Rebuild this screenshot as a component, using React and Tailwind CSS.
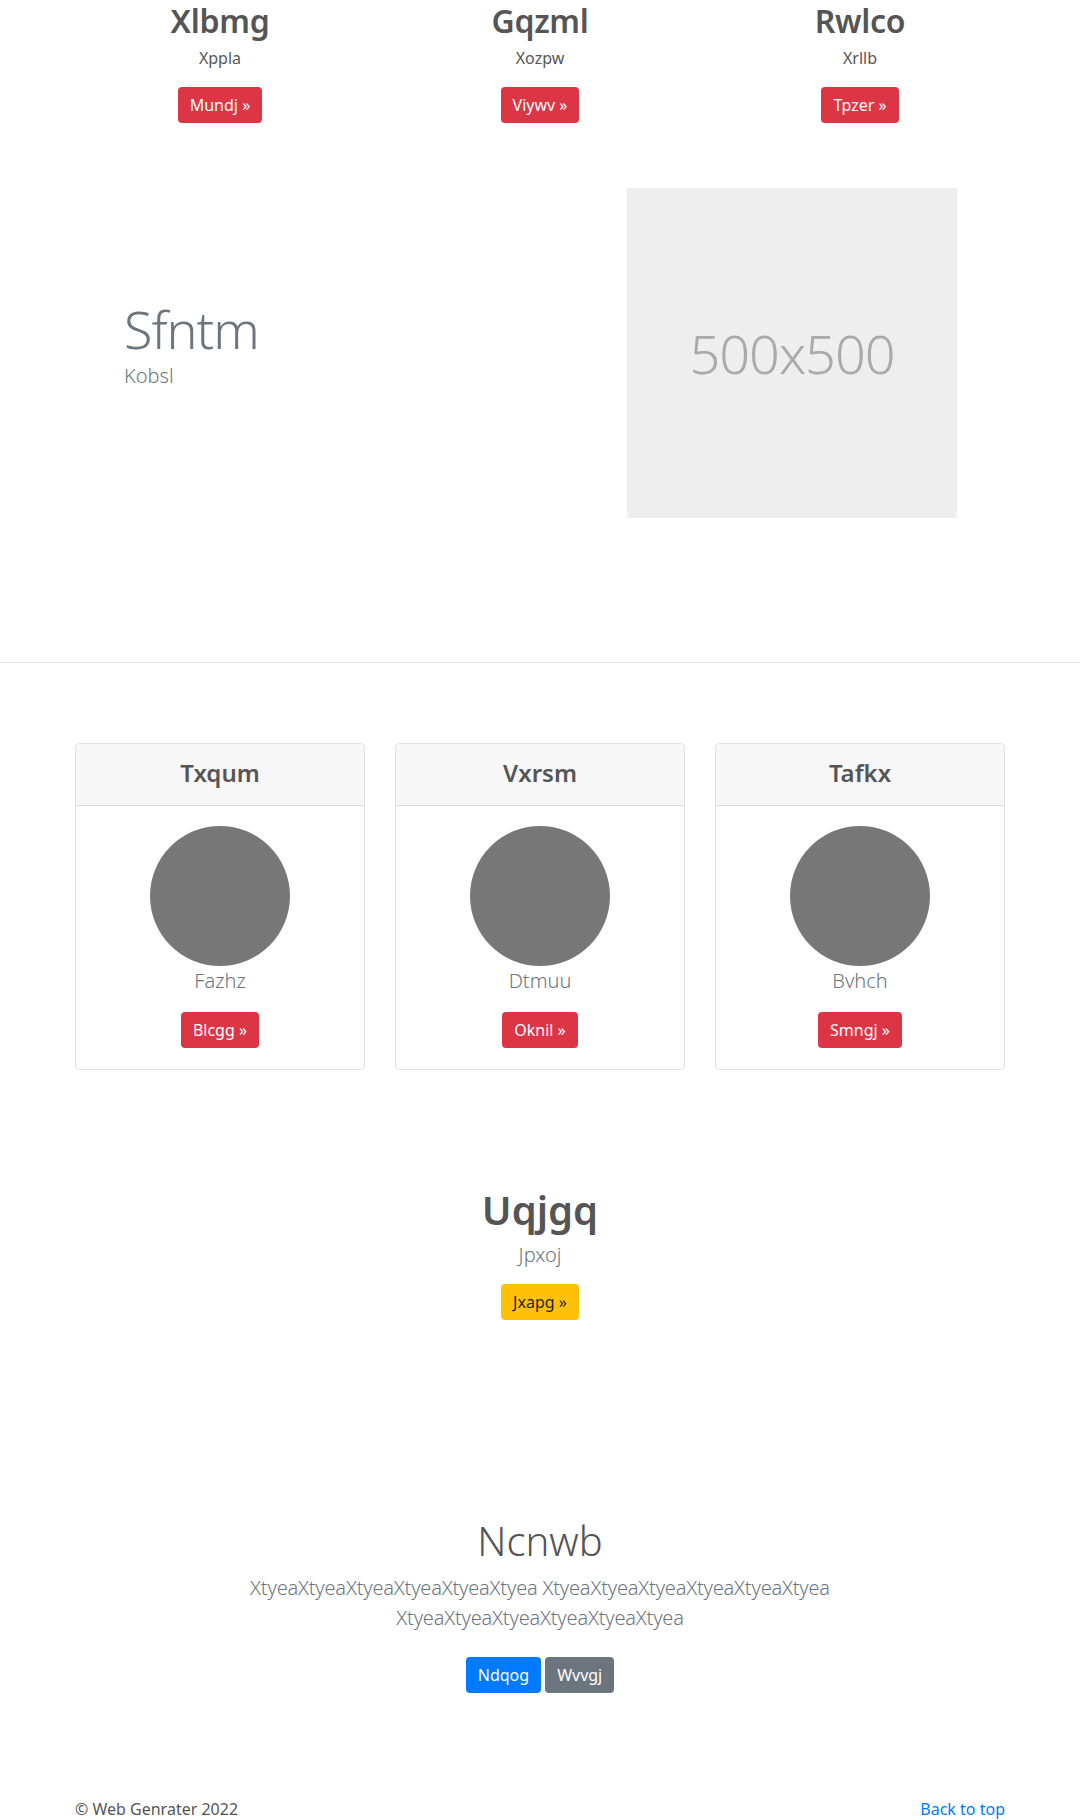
import React from "react";

const font = "font-['Segoe_UI','Noto_Sans','Open_Sans',sans-serif]";

function Btn({ children, color = "red" }) {
  const colors = {
    red: "bg-[#dc3545] text-white",
    yellow: "bg-[#ffc107] text-[#212529]",
    blue: "bg-[#007bff] text-white",
    gray: "bg-[#6c757d] text-white",
  };
  return (
    <a className={`inline-block rounded-[4px] px-3 py-[6px] text-base leading-6 ${colors[color]}`}>
      {children}
    </a>
  );
}

const tops = [
  { title: "Xlbmg", sub: "Xppla", btn: "Mundj »" },
  { title: "Gqzml", sub: "Xozpw", btn: "Viywv »" },
  { title: "Rwlco", sub: "Xrllb", btn: "Tpzer »" },
];

const cards = [
  { title: "Txqum", name: "Fazhz", btn: "Blcgg »" },
  { title: "Vxrsm", name: "Dtmuu", btn: "Oknil »" },
  { title: "Tafkx", name: "Bvhch", btn: "Smngj »" },
];

export default function App() {
  return (
    <div className={`${font} bg-white text-[#212529] min-h-[1820px]`}>
      {/* top three columns */}
      <section className="mx-auto w-[960px] pt-[2px]">
        <div className="grid grid-cols-3">
          {tops.map((t) => (
            <div key={t.title} className="flex flex-col items-center px-[15px]">
              <h2 className="text-[32px] font-semibold leading-[1.2] tracking-[-0.3px] text-[#555] mb-[6px]">{t.title}</h2>
              <p className="text-base leading-6 text-[#555] mb-[17px]">{t.sub}</p>
              <Btn>{t.btn}</Btn>
            </div>
          ))}
        </div>
      </section>

      {/* feature row */}
      <section className="mx-auto w-[960px] flex pt-[65px] pb-[144px]">
        <div className="w-[480px] pl-[64px] flex flex-col justify-center pb-[16px]">
          <h1 className="text-[52px] font-light leading-[1.1] tracking-[-1px] text-[#6c757d]">Sfntm</h1>
          <p className="text-xl font-light leading-[30px] text-[#6c757d] mt-[4px]">Kobsl</p>
        </div>
        <div className="w-[480px] pl-[87px]">
          <div className="w-[330px] h-[330px] bg-[#eeeeee] flex items-center justify-center">
            <span className="text-[54px] font-light tracking-[-1px] text-[#aaaaaa]">500x500</span>
          </div>
        </div>
      </section>

      <hr className="border-0 border-t border-[#e5e5e5]" />

      {/* cards */}
      <section className="mx-auto w-[960px] pt-[80px] px-[15px]">
        <div className="grid grid-cols-3 gap-[30px]">
          {cards.map((c) => (
            <div key={c.title} className="border border-[rgba(0,0,0,0.125)] rounded-[4px] overflow-hidden">
              <div className="h-[62px] bg-[#f7f7f7] border-b border-[rgba(0,0,0,0.125)] flex items-center justify-center pb-[3px]">
                <h4 className="text-2xl font-semibold text-[#555] leading-[1.2]">{c.title}</h4>
              </div>
              <div className="flex flex-col items-center pt-[20px] pb-[21px]">
                <div className="w-[140px] h-[140px] rounded-full bg-[#777777]" />
                <p className="text-xl font-light leading-[30px] text-[#6c757d] mb-4">{c.name}</p>
                <Btn>{c.btn}</Btn>
              </div>
            </div>
          ))}
        </div>
      </section>

      {/* centered callout */}
      <section className="flex flex-col items-center pt-[116px]">
        <h1 className="text-[40px] font-semibold leading-[1.2] text-[#555] mb-[6px]">Uqjgq</h1>
        <p className="text-xl font-light leading-[30px] text-[#6c757d] mb-[14px]">Jpxoj</p>
        <Btn color="yellow">Jxapg »</Btn>
      </section>

      {/* jumbotron */}
      <section className="flex flex-col items-center pt-[197px] text-center">
        <h1 className="text-[40px] font-light leading-[1.2] text-[#555] mb-2">Ncnwb</h1>
        <p className="text-xl font-light leading-[30px] tracking-[-0.2px] text-[#6c757d] w-[600px] mb-6">
          XtyeaXtyeaXtyeaXtyeaXtyeaXtyea XtyeaXtyeaXtyeaXtyeaXtyeaXtyea XtyeaXtyeaXtyeaXtyeaXtyeaXtyea
        </p>
        <div className="flex gap-[4px]">
          <Btn color="blue">Ndqog</Btn>
          <Btn color="gray">Wvvgj</Btn>
        </div>
      </section>

      {/* footer */}
      <footer className="mx-auto w-[960px] px-[15px] pt-[104px] flex justify-between text-base leading-6">
        <p className="text-[#555]">© Web Genrater 2022</p>
        <a className="text-[#007bff]">Back to top</a>
      </footer>
    </div>
  );
}
